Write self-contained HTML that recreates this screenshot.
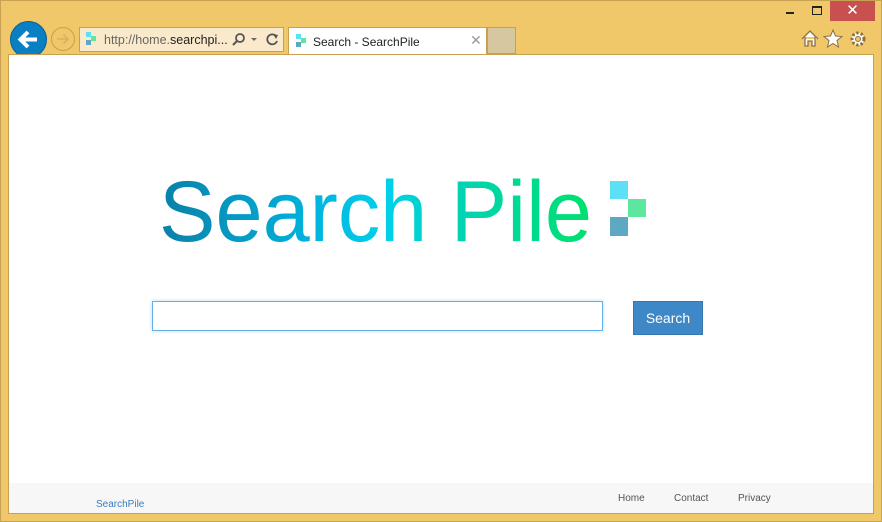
<!DOCTYPE html>
<html><head><meta charset="utf-8"><style>
*{margin:0;padding:0;box-sizing:border-box}
body{width:882px;height:522px;background:#f0c86a;position:relative;overflow:hidden;font-family:"Liberation Sans",sans-serif}
.abs{position:absolute}
</style></head><body>
<div class="abs" style="left:0;top:0;width:882px;height:522px;border:1px solid #c9a153"></div>
<!-- window controls -->
<div class="abs" style="left:786px;top:12px;width:8px;height:2px;background:#222"></div>
<div class="abs" style="left:812px;top:6px;width:10px;height:9px;border:1px solid #222;border-top-width:2px"></div>
<div class="abs" style="left:830px;top:1px;width:45px;height:20px;background:#c8504f;color:#fff;font-size:15px;text-align:center;line-height:20px">✕</div>
<!-- right icons -->
<svg class="abs" style="left:800px;top:29px" width="70" height="20" viewBox="0 0 70 20">
<path d="M2 10 L10 2 L18 10 M5 8 V17 H8 V12 H12 V17 H15 V8" fill="#fff" stroke="#8a7040" stroke-width="1.3"/>
<polygon points="33,1 35.5,7 42,7.5 37,11.5 38.5,18 33,14.5 27.5,18 29,11.5 24,7.5 30.5,7" fill="#fff" stroke="#8a7040" stroke-width="1"/>
<circle cx="58" cy="10" r="6" fill="#fff" stroke="#8a7040" stroke-width="3" stroke-dasharray="2.4 2"/>
<circle cx="58" cy="10" r="2.5" fill="#f0c86a" stroke="#8a7040" stroke-width="1"/>
</svg>
<!-- back -->
<div class="abs" style="left:10px;top:21px;width:37px;height:37px;border-radius:50%;background:#0b7fc3;border:1px solid #0a5e90"></div>
<svg class="abs" style="left:10px;top:21px" width="37" height="37"><path d="M27 18.5 H11 M18 11 L10.5 18.5 L18 26" stroke="#fff" stroke-width="4" fill="none"/></svg>
<div class="abs" style="left:51px;top:27px;width:24px;height:24px;border-radius:50%;border:1px solid #c99f4d"></div>
<svg class="abs" style="left:51px;top:27px" width="24" height="24"><path d="M6 12 H17 M12.5 7.5 L17 12 L12.5 16.5" stroke="#d7b060" stroke-width="1.6" fill="none"/></svg>
<!-- address bar -->
<div class="abs" style="left:79px;top:27px;width:205px;height:25px;background:#faeacb;border:1px solid #c8a050"></div>
<svg class="abs" style="left:86px;top:32px" width="12" height="14"><rect x="0" y="0" width="5" height="5" fill="#5de0f5"/><rect x="5" y="4" width="5" height="5" fill="#5ce6a0"/><rect x="0" y="8" width="5" height="5" fill="#5fa8c4"/></svg>
<div class="abs" style="left:104px;top:33px;font-size:12.5px;color:#666">http://home.<span style="color:#222">searchpi...</span></div>
<svg class="abs" style="left:232px;top:32px" width="50" height="16"><circle cx="8" cy="6" r="4" fill="none" stroke="#555" stroke-width="1.8"/><path d="M5 9 L1 13" stroke="#555" stroke-width="2"/><path d="M19 6 L25 6 L22 9Z" fill="#666"/><path d="M44 4 A5 5 0 1 0 45 9" fill="none" stroke="#555" stroke-width="1.8"/><path d="M41 2 L46 3 L44 7Z" fill="#555"/></svg>
<!-- tab -->
<div class="abs" style="left:288px;top:27px;width:199px;height:28px;background:#fff;border:1px solid #c8a050;border-bottom:none"></div>
<svg class="abs" style="left:296px;top:34px" width="12" height="14"><rect x="0" y="0" width="5" height="5" fill="#5de0f5"/><rect x="5" y="4" width="5" height="5" fill="#5ce6a0"/><rect x="0" y="8" width="5" height="5" fill="#5fa8c4"/></svg>
<div class="abs" style="left:313px;top:35px;font-size:12px;color:#222">Search - SearchPile</div>
<div class="abs" style="left:470px;top:32px;font-size:14px;color:#999">✕</div>
<div class="abs" style="left:487px;top:27px;width:29px;height:27px;background:#d6c7a1;border:1px solid #c8a050"></div>
<!-- content -->
<div class="abs" style="left:8px;top:54px;width:866px;height:460px;background:#fff;border:1px solid #c8a050"></div>
<svg class="abs" style="left:0;top:0" width="882" height="300">
<defs><linearGradient id="g" x1="160" y1="0" x2="592" y2="0" gradientUnits="userSpaceOnUse">
<stop offset="0" stop-color="#0a80a8"/><stop offset="0.35" stop-color="#00b3dd"/><stop offset="0.52" stop-color="#00d0ec"/><stop offset="0.7" stop-color="#00d4b2"/><stop offset="1" stop-color="#00e06c"/></linearGradient></defs>
<text x="159" y="241" font-family="Liberation Sans,sans-serif" font-size="86" fill="url(#g)" textLength="433" lengthAdjust="spacingAndGlyphs">Search Pile</text>
<rect x="610" y="181" width="18" height="18" fill="#5de0f5"/><rect x="628" y="199" width="18" height="18" fill="#5ce6a0"/><rect x="610" y="217" width="18" height="19" fill="#5fa8c4"/>
</svg>
<div class="abs" style="left:152px;top:301px;width:451px;height:30px;border:1px solid #66aee6;box-shadow:0 0 4px #b8dcf7;background:#fff"></div>
<div class="abs" style="left:633px;top:301px;width:70px;height:34px;background:#3f88c8;border:1px solid #3577b0;color:#fff;font-size:14px;text-align:center;line-height:32px">Search</div>
<!-- footer -->
<div class="abs" style="left:9px;top:483px;width:864px;height:30px;background:#f7f7f7"></div>
<div class="abs" style="left:96px;top:499px;font-size:10px;color:#3a7cc0">SearchPile</div>
<div class="abs" style="left:618px;top:493px;font-size:10px;color:#555">Home</div>
<div class="abs" style="left:674px;top:493px;font-size:10px;color:#555">Contact</div>
<div class="abs" style="left:738px;top:493px;font-size:10px;color:#555">Privacy</div>
</body></html>
